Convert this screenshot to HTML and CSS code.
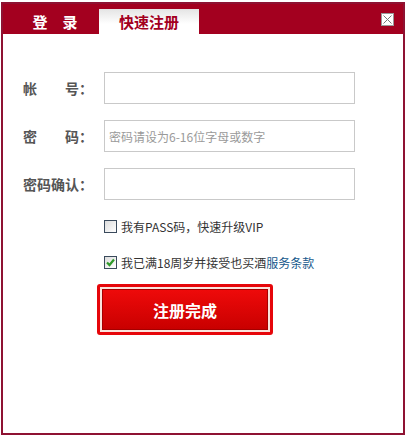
FILE: index.html
```html
<!DOCTYPE html>
<html>
<head><title>快速注册</title>
    <link rel="stylesheet" href="styles.css">
</head>
<body>
  <div class="dialog">
    <div class="head">
      <div class="tab tab-login">登　录</div>
      <div class="tab tab-reg">快速注册</div>
      <div class="close">
        <svg width="11" height="11" viewBox="0 0 11 11"><path d="M1.5 1.5 L9.5 9.5 M9.5 1.5 L1.5 9.5" stroke="#777" stroke-width="1" fill="none"/></svg>
      </div>
    </div>

    <div class="form">
      <div class="row">
        <label class="lbl">帐　　号：</label>
        <input class="ipt" type="text">
      </div>
      <div class="row">
        <label class="lbl">密　　码：</label>
        <input class="ipt" type="password" placeholder="密码请设为6-16位字母或数字">
      </div>
      <div class="row">
        <label class="lbl">密码确认：</label>
        <input class="ipt" type="password">
      </div>

      <div class="check first">
        <span class="box"></span>
        <span>我有PASS码，快速升级VIP</span>
      </div>
      <div class="check">
        <span class="box">
          <svg width="11" height="11" viewBox="0 0 11 11"><path d="M2 5.5 L4.5 8 L9 2.5" stroke="#2f9a2a" stroke-width="2.2" fill="none"/></svg>
        </span>
        <span>我已满18周岁并接受也买酒<a class="link" href="#">服务条款</a></span>
      </div>

      <div class="submit-wrap">
        <button class="submit">注册完成</button>
      </div>
    </div>
  </div>
</body>
</html>
```

FILE: styles.css
```css
body {
  margin: 0;
  background: #fff;
  font-family: "Noto Sans CJK SC", "Liberation Sans", sans-serif;
}
.dialog {
  width: 400px;
  height: 429px;
  margin: 2px 0 0 1px;
  border: 2px solid #8e1232;
  background: #fff;
}
.head {
  height: 30px;
  background: #a3001f;
  display: flex;
  align-items: flex-end;
  position: relative;
}
.tab {
  height: 25px;
  line-height: 25px;
  font-size: 15px;
  font-weight: bold;
  text-align: center;
  white-space: nowrap;
}
.tab-login {
  width: 88px;
  padding-left: 8px;
  color: #fff;
}
.tab-reg {
  width: 100px;
  color: #a3001f;
  background: linear-gradient(#e4e4e4, #fff 60%);
}
.close {
  position: absolute;
  right: 9px;
  top: 9px;
  width: 11px;
  height: 11px;
  border: 1px solid #999;
  background: #fff;
  display: flex;
}
.form {
  padding: 38px 0 0 20px;
}
.row {
  display: flex;
  align-items: center;
  height: 32px;
  margin-bottom: 16px;
}
.lbl {
  width: 81px;
  font-size: 14px;
  font-weight: bold;
  color: #555;
}
.ipt {
  width: 241px;
  height: 30px;
  padding: 0 4px;
  margin: 0;
  border: 1px solid #c9c9c9;
  font-family: inherit;
  font-size: 12px;
  color: #333;
  box-sizing: content-box;
  outline: none;
}
.ipt::placeholder {
  color: #9a9a9a;
}
.check {
  display: flex;
  align-items: center;
  height: 20px;
  margin: 16px 0 0 81px;
  font-size: 12px;
  color: #333;
}
.check.first {
  margin-top: 15px;
}
.box {
  width: 11px;
  height: 11px;
  border: 1px solid #3a4a5c;
  background: linear-gradient(135deg, #dcdcdc, #fff);
  margin-right: 4px;
  display: flex;
}
.link {
  color: #16588c;
  text-decoration: none;
}
.submit-wrap {
  width: 166px;
  height: 41px;
  margin: 12px 0 0 74px;
  padding: 2px;
  border: 3px solid #e6060a;
  border-radius: 3px;
  background: #fbe3dc;
}
.submit {
  width: 166px;
  height: 41px;
  border: 1px solid #a50000;
  background: linear-gradient(#ee0a0a, #c90000);
  color: #fff;
  font-family: inherit;
  font-size: 16px;
  font-weight: bold;
  cursor: pointer;
}
```
